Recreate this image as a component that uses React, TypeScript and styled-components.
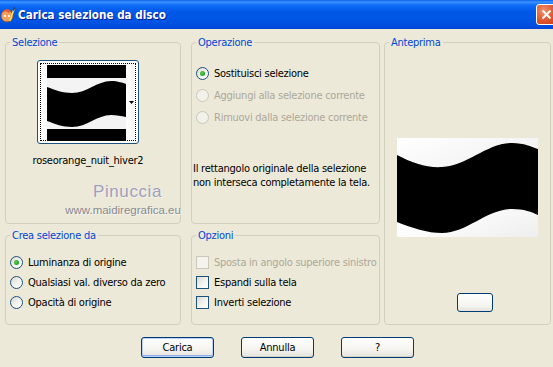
import React from "react";
import styled, { createGlobalStyle } from "styled-components";

const GlobalStyle = createGlobalStyle`
  html, body { margin: 0; padding: 0; }
  body {
    width: 553px;
    height: 367px;
    overflow: hidden;
    background: #ece9d8;
    font-family: "DejaVu Sans Condensed", "Liberation Sans", Arial, sans-serif;
    font-size: 11px;
    letter-spacing: -0.25px;
    color: #000;
  }
`;

const Window = styled.div`
  width: 553px;
  height: 367px;
  display: flex;
  flex-direction: column;
  background: #ece9d8;
  overflow: hidden;
`;

const TitleBar = styled.div`
  height: 29px;
  flex-shrink: 0;
  display: flex;
  align-items: center;
  gap: 3px;
  padding-left: 0;
  background: linear-gradient(
    to bottom,
    #0a5ff0 0px,
    #3d95ff 2px,
    #0f6cf8 5px,
    #0058e8 12px,
    #0054e3 22px,
    #0046d6 29px
  );
`;

const TitleText = styled.span`
  font-family: "DejaVu Sans Condensed", "Liberation Sans", sans-serif;
  font-weight: bold;
  font-size: 11.6px;
  letter-spacing: 0;
  color: #fff;
  text-shadow: 1px 1px 0 #0a1e8c;
`;

const CloseButton = styled.div`
  margin-left: auto;
  margin-right: -4px;
  width: 21px;
  height: 21px;
  box-sizing: border-box;
  border: 1px solid #fff;
  border-radius: 3px;
  background: radial-gradient(circle at 35% 30%, #f0906a 0%, #e0562e 55%, #c83c16 100%);
  display: flex;
  align-items: center;
  justify-content: center;
`;

const Content = styled.div`
  padding: 7px 0 0 5px;
  display: grid;
  grid-template-columns: 182px 189px 167px;
  grid-template-rows: 188px 96px;
  column-gap: 4px;
  row-gap: 5px;
`;

const Group = styled.fieldset<{ $col: number; $row: string; $width?: number }>`
  margin: 0;
  padding: 0;
  min-width: 0;
  box-sizing: border-box;
  border: 1px solid #d0d0bf;
  border-radius: 4px;
  width: ${(p) => (p.$width ? `${p.$width}px` : "auto")};
  grid-column: ${(p) => p.$col};
  grid-row: ${(p) => p.$row};
  display: flex;
  flex-direction: column;
`;

const Legend = styled.legend`
  color: #0046d5;
  padding: 0 2px;
  margin-left: 4px;
  line-height: 13px;
`;

const SelectionBody = styled.div`
  display: flex;
  flex-direction: column;
  align-items: center;
  padding: 11px 10px 0 0;
`;

const Thumb = styled.div`
  width: 102px;
  height: 84px;
  box-sizing: border-box;
  border: 1px solid #1c5180;
  border-radius: 3px;
  background: #fff;
  display: flex;
  align-items: stretch;
  padding: 2px;
`;

const ThumbFocus = styled.div`
  flex: 1;
  border: 1px dotted #000;
  display: flex;
  padding: 1px 0 1px 6px;
`;

const ThumbArrow = styled.div`
  flex: 1;
  display: flex;
  align-items: center;
  justify-content: flex-end;
  padding-right: 1px;
  background: linear-gradient(to right, #fff 0, #fff 5px, #f2f2f2 6px, #fff 9px);
`;

const FileName = styled.div`
  margin-top: 10px;
  line-height: 13px;
  white-space: nowrap;
`;

const Watermark = styled.div`
  align-self: flex-start;
  margin: 15px 0 0 56px;
  width: 122px;
  display: flex;
  flex-direction: column;
  align-items: center;
  letter-spacing: 0;
`;

const WatermarkName = styled.div`
  font-family: "Liberation Sans", Arial, sans-serif;
  font-size: 17px;
  line-height: 19px;
  color: #a0a0be;
  letter-spacing: 0.6px;
  margin-left: 9px;
  text-shadow: 1px 1px 0 #f4f2ea;
`;

const WatermarkUrl = styled.div`
  font-family: "Liberation Sans", Arial, sans-serif;
  font-size: 11.5px;
  line-height: 13px;
  margin-top: 3px;
  color: #8a8a90;
  white-space: nowrap;
  text-shadow: 1px 1px 0 #f6f4ec;
`;

const OptionList = styled.div<{ $top: number; $gap: number }>`
  display: flex;
  flex-direction: column;
  gap: ${(p) => p.$gap}px;
  padding: ${(p) => p.$top}px 0 0 4px;
`;

const OptionRow = styled.label<{ $disabled?: boolean }>`
  display: flex;
  align-items: center;
  gap: 5px;
  height: 13px;
  line-height: 13px;
  white-space: nowrap;
  color: ${(p) => (p.$disabled ? "#aca899" : "#000")};
`;

const RadioCircle = styled.span<{ $disabled?: boolean }>`
  width: 13px;
  height: 13px;
  box-sizing: border-box;
  border-radius: 50%;
  border: 1px solid ${(p) => (p.$disabled ? "#cac8bb" : "#1c5180")};
  background: ${(p) =>
    p.$disabled ? "#f2f1ea" : "linear-gradient(135deg, #dcd9cf 0%, #f6f5f1 60%, #ffffff 100%)"};
  display: flex;
  align-items: center;
  justify-content: center;
  flex-shrink: 0;
`;

const RadioDot = styled.span`
  width: 5px;
  height: 5px;
  border-radius: 50%;
  background: radial-gradient(circle at 40% 40%, #55d255 0%, #21a121 70%, #1a8a1a 100%);
`;

const CheckSquare = styled.span<{ $disabled?: boolean }>`
  width: 13px;
  height: 13px;
  box-sizing: border-box;
  border: 1px solid ${(p) => (p.$disabled ? "#cac8bb" : "#1c5180")};
  background: ${(p) =>
    p.$disabled ? "#f4f3ee" : "linear-gradient(135deg, #dcd9cf 0%, #f6f5f1 60%, #ffffff 100%)"};
  flex-shrink: 0;
`;

const Note = styled.div`
  margin: 38px 0 0 1px;
  line-height: 14px;
  white-space: nowrap;
`;

const PreviewBody = styled.div`
  flex: 1;
  display: flex;
  flex-direction: column;
  align-items: center;
  padding-top: 89px;
`;

const PreviewImage = styled.div`
  width: 141px;
  height: 99px;
  background: linear-gradient(160deg, #ffffff 0%, #f3f3f3 40%, #ffffff 60%, #eeeeee 100%);
`;

const SmallButton = styled.div`
  margin: 56px 0 0 15px;
  width: 36px;
  height: 19px;
  box-sizing: border-box;
  border: 1px solid #003c74;
  border-radius: 3px;
  background: linear-gradient(to bottom, #ffffff 0%, #f4f4f0 70%, #e4e3dc 100%);
`;

const ButtonRow = styled.div`
  display: flex;
  justify-content: center;
  gap: 27px;
  margin-top: 12px;
  padding-left: 2px;
`;

const Button = styled.button<{ $default?: boolean }>`
  width: 73px;
  height: 21px;
  box-sizing: border-box;
  border: 1px solid #003c74;
  border-radius: 3px;
  font-family: "DejaVu Sans Condensed", "Liberation Sans", Arial, sans-serif;
  font-size: 11px;
  letter-spacing: -0.25px;
  color: #000;
  padding: 0;
  background: linear-gradient(to bottom, #ffffff 0%, #f5f4ef 60%, #e3e2da 100%);
  box-shadow: ${(p) =>
    p.$default ? "inset 0 0 0 1px #b9d1fa, inset 0 -1px 0 1px #8fb0ea" : "inset 0 -1px 0 #d6d0c5"};
`;

function Radio({ checked, disabled }: { checked?: boolean; disabled?: boolean }) {
  return <RadioCircle $disabled={disabled}>{checked ? <RadioDot /> : null}</RadioCircle>;
}

function AppIcon() {
  return (
    <svg width="15" height="16" viewBox="0 0 15 16">
      <ellipse cx="7" cy="9" rx="6" ry="6" fill="#f0a060" stroke="#8a4a20" strokeWidth="0.8" />
      <path d="M2 6 C3 2 8 1 11 4 L9 6 C7 4 4 4 2 6 Z" fill="#e85a2a" />
      <circle cx="5" cy="9" r="1.1" fill="#fff" />
      <circle cx="9" cy="9" r="1.1" fill="#fff" />
      <path d="M10 14 L14 2" stroke="#f4e04a" strokeWidth="1.6" />
      <path d="M13.3 3.5 L14.6 0.5" stroke="#2a2a2a" strokeWidth="1.2" />
    </svg>
  );
}

export default function App() {
  return (
    <Window>
      <GlobalStyle />
      <TitleBar>
        <AppIcon />
        <TitleText>Carica selezione da disco</TitleText>
        <CloseButton>
          <svg width="11" height="11" viewBox="0 0 11 11">
            <path d="M1.5 1.5 L9.5 9.5 M9.5 1.5 L1.5 9.5" stroke="#fff" strokeWidth="2" />
          </svg>
        </CloseButton>
      </TitleBar>

      <Content>
        <Group $col={1} $row="1" $width={176}>
          <Legend>Selezione</Legend>
          <SelectionBody>
            <Thumb>
              <ThumbFocus>
                <svg width="79" height="76" viewBox="0 1 79 76" preserveAspectRatio="none">
                  <rect x="0" y="0" width="79" height="78" fill="#f4f4f4" />
                  <rect x="0" y="0" width="79" height="14" fill="#000" />
                  <path
                    d="M0,23 C8,26 16,29 25,29 C40,29 50,17 64,17 C71,17 76,19 79,20 L79,53 C74,52 70,51 64,51 C50,51 40,63 25,63 C16,63 8,60 0,57 Z"
                    fill="#000"
                  />
                  <rect x="0" y="65" width="79" height="13" fill="#000" />
                </svg>
                <ThumbArrow>
                  <svg width="5" height="3" viewBox="0 0 5 3">
                    <path d="M0 0 H5 L2.5 3 Z" fill="#000" />
                  </svg>
                </ThumbArrow>
              </ThumbFocus>
            </Thumb>
            <FileName>roseorange_nuit_hiver2</FileName>
            <Watermark>
              <WatermarkName>Pinuccia</WatermarkName>
              <WatermarkUrl>www.maidiregrafica.eu</WatermarkUrl>
            </Watermark>
          </SelectionBody>
        </Group>

        <Group $col={2} $row="1">
          <Legend>Operazione</Legend>
          <OptionList $top={18} $gap={9}>
            <OptionRow>
              <Radio checked />
              Sostituisci selezione
            </OptionRow>
            <OptionRow $disabled>
              <Radio disabled />
              Aggiungi alla selezione corrente
            </OptionRow>
            <OptionRow $disabled>
              <Radio disabled />
              Rimuovi dalla selezione corrente
            </OptionRow>
          </OptionList>
          <Note>
            Il rettangolo originale della selezione
            <br />
            non interseca completamente la tela.
          </Note>
        </Group>

        <Group $col={3} $row="1 / span 2">
          <Legend>Anteprima</Legend>
          <PreviewBody>
            <PreviewImage>
              <svg width="141" height="99" viewBox="0 0 141 99">
                <path
                  d="M0,17 C15,25 30,30 45,29 C70,28 90,5 115,5 C127,5 135,9 141,11 L141,77 C135,74 127,71 115,71 C90,71 70,95 45,95 C30,95 15,90 0,84 Z"
                  fill="#000"
                />
              </svg>
            </PreviewImage>
            <SmallButton />
          </PreviewBody>
        </Group>

        <Group $col={1} $row="2" $width={176}>
          <Legend>Crea selezione da</Legend>
          <OptionList $top={14} $gap={7}>
            <OptionRow>
              <Radio checked />
              Luminanza di origine
            </OptionRow>
            <OptionRow>
              <Radio />
              Qualsiasi val. diverso da zero
            </OptionRow>
            <OptionRow>
              <Radio />
              Opacità di origine
            </OptionRow>
          </OptionList>
        </Group>

        <Group $col={2} $row="2">
          <Legend>Opzioni</Legend>
          <OptionList $top={14} $gap={7}>
            <OptionRow $disabled>
              <CheckSquare $disabled />
              Sposta in angolo superiore sinistro
            </OptionRow>
            <OptionRow>
              <CheckSquare />
              Espandi sulla tela
            </OptionRow>
            <OptionRow>
              <CheckSquare />
              Inverti selezione
            </OptionRow>
          </OptionList>
        </Group>
      </Content>

      <ButtonRow>
        <Button $default>Carica</Button>
        <Button>Annulla</Button>
        <Button>?</Button>
      </ButtonRow>
    </Window>
  );
}
